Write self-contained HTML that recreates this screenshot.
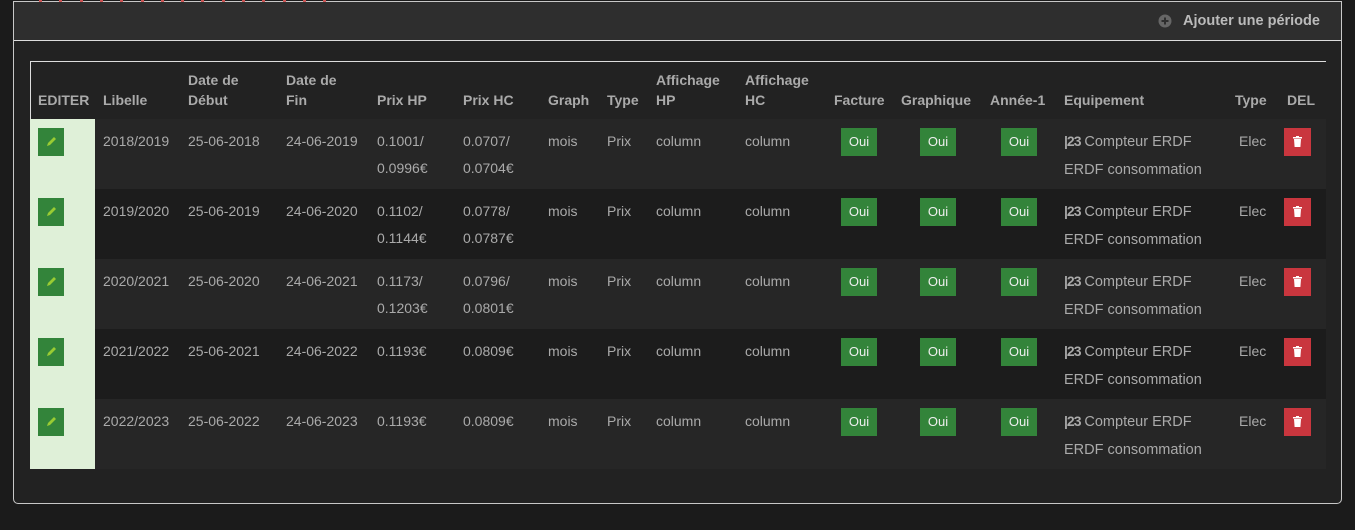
<!DOCTYPE html>
<html><head><meta charset="utf-8"><style>
*{margin:0;padding:0;box-sizing:border-box}
body{width:1355px;height:530px;background:#1b1b1b;font-family:"Liberation Sans",sans-serif;font-size:14px;color:#aaa;position:relative;overflow:hidden}
.a{position:absolute;white-space:nowrap}
.panel{position:absolute;left:13px;top:1px;width:1329px;height:503px;border:1px solid #c8c8c8;border-radius:0 0 5px 5px;background:#222}
.hdr{position:absolute;left:0;top:0;width:100%;height:39px;background:#2e2e2e;border-bottom:1px solid #ddd}
.th{font-weight:bold;color:#aaa;line-height:20px}
.btn{position:absolute;background:#33843a;color:#eee;font-size:13px;text-align:center;line-height:28px;height:28px;width:36px}
.del{position:absolute;background:#c9363e;width:27px;height:28px}
.ed{position:absolute;background:#33843a;width:26px;height:28px;left:38px}
</style></head><body>
<div class="panel">
<div class="hdr">
<svg class="a" style="left:1144px;top:12px" width="14" height="14" viewBox="0 0 14 14"><circle cx="7" cy="7" r="6.5" fill="#666"/><path d="M7 3.5v7M3.5 7h7" stroke="#2e2e2e" stroke-width="2"/></svg>
<div class="a th" style="left:1169px;top:9px;color:#bbb;font-size:14.5px">Ajouter une période</div>
</div>
</div>
<div class="a" style="left:30px;top:61px;width:1296px;height:1px;background:#ddd"></div>
<div class="a" style="left:30px;top:61px;width:1px;height:58px;background:#ddd"></div>
<div class="a" style="left:31px;top:119px;width:1295px;height:70px;background:#262626"></div>
<div class="a" style="left:31px;top:189px;width:1295px;height:70px;background:#1c1c1c"></div>
<div class="a" style="left:31px;top:259px;width:1295px;height:70px;background:#262626"></div>
<div class="a" style="left:31px;top:329px;width:1295px;height:70px;background:#1c1c1c"></div>
<div class="a" style="left:31px;top:399px;width:1295px;height:70px;background:#262626"></div>
<div class="a" style="left:30px;top:119px;width:65px;height:350px;background:#dff0d8"></div>
<div id="dots"></div>
<div class="a th" style="left:38px;top:90px">EDITER</div>
<div class="a th" style="left:103px;top:90px">Libelle</div>
<div class="a th" style="left:188px;top:70px">Date de<br>Début</div>
<div class="a th" style="left:286px;top:70px">Date de<br>Fin</div>
<div class="a th" style="left:377px;top:90px">Prix HP</div>
<div class="a th" style="left:463px;top:90px">Prix HC</div>
<div class="a th" style="left:548px;top:90px">Graph</div>
<div class="a th" style="left:607px;top:90px">Type</div>
<div class="a th" style="left:656px;top:70px">Affichage<br>HP</div>
<div class="a th" style="left:745px;top:70px">Affichage<br>HC</div>
<div class="a th" style="left:834px;top:90px">Facture</div>
<div class="a th" style="left:901px;top:90px">Graphique</div>
<div class="a th" style="left:990px;top:90px">Année-1</div>
<div class="a th" style="left:1064px;top:90px">Equipement</div>
<div class="a th" style="left:1235px;top:90px">Type</div>
<div class="a th" style="left:1287px;top:90px">DEL</div>
<div id="rows"></div>
<script>
var d='';for(var i=0;i<15;i++)d+='<div class="a" style="left:'+(39+i*20.3)+'px;top:0;width:3px;height:2px;background:#c55"></div>';
document.getElementById('dots').innerHTML=d;
var R=[['2018/2019','25-06-2018','24-06-2019','0.1001/<br>0.0996€','0.0707/<br>0.0704€'],
['2019/2020','25-06-2019','24-06-2020','0.1102/<br>0.1144€','0.0778/<br>0.0787€'],
['2020/2021','25-06-2020','24-06-2021','0.1173/<br>0.1203€','0.0796/<br>0.0801€'],
['2021/2022','25-06-2021','24-06-2022','0.1193€','0.0809€'],
['2022/2023','25-06-2022','24-06-2023','0.1193€','0.0809€']];
var h='';
R.forEach(function(r,i){var y=119+i*70,t=y+9;
function c(x,s){h+='<div class="a" style="left:'+x+'px;top:'+t+'px;line-height:27px">'+s+'</div>';}
h+='<div class="ed" style="top:'+(y+9)+'px"><svg width="26" height="28" viewBox="0 0 26 28"><path d="M9 18l1-3 6-6 2 2-6 6z" fill="#9c3"/></svg></div>';
c(103,r[0]);c(188,r[1]);c(286,r[2]);c(377,r[3]);c(463,r[4]);c(548,'mois');c(607,'Prix');c(656,'column');c(745,'column');
[841,920,1001].forEach(function(x){h+='<div class="btn" style="left:'+x+'px;top:'+(y+9)+'px">Oui</div>';});
c(1064,'<b style="letter-spacing:-1px">|23</b> <span style="font-size:14.5px">Compteur ERDF</span><br><span style="font-size:14.5px">ERDF consommation</span>');c(1239,'Elec');
h+='<div class="del" style="left:1284px;top:'+(y+9)+'px"><svg width="27" height="28" viewBox="0 0 27 28"><path d="M9 9h9v1.5H9zM12 8h3v1h-3zM10 11h7l-.6 8h-5.8z" fill="#fff"/></svg></div>';
});
document.getElementById('rows').innerHTML=h;
</script>
</body></html>
